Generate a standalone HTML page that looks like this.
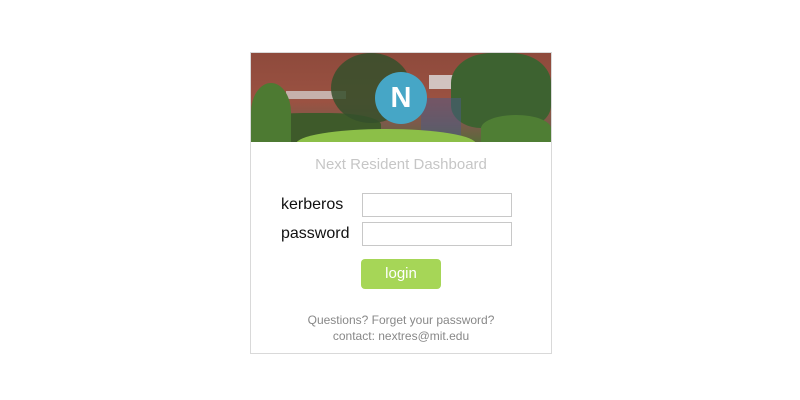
<!DOCTYPE html>
<html><head><style>
body{margin:0;width:800px;height:400px;background:#fff;font-family:"Liberation Sans",sans-serif;position:relative;overflow:hidden}
.card{position:absolute;left:250px;top:52px;width:300px;height:300px;border:1px solid #d9d9d9}
.photo{position:absolute;left:0;top:0;width:300px;height:89px;overflow:hidden;background:#9a4a3a}
.photo div{position:absolute}
.circle{position:absolute;left:124px;top:19px;width:52px;height:52px;border-radius:50%;background:#46a6c6;color:#fff;font-size:29px;font-weight:bold;text-align:center;line-height:52px}
.title{position:absolute;top:103px;width:300px;text-align:center;color:#c6c6c6;font-size:15px}
.lbl{position:absolute;left:30px;font-size:16px;color:#111}
.inp{position:absolute;left:111px;width:148px;height:22px;border:1px solid #c8c8c8;background:#fff}
.btn{position:absolute;left:110px;top:206px;width:80px;height:30px;border-radius:4px;background:#a6d657;color:#fff;font-size:15px;text-align:center;line-height:30px}
.foot{position:absolute;top:259px;width:300px;text-align:center;color:#888;font-size:12px;line-height:16px}
</style></head><body>
<div class="card">
 <div class="photo">
  <div style="left:0;top:0;width:300px;height:89px;background:linear-gradient(180deg,#8e4a3c 0%,#9b5242 55%,#7a5a4a 80%,#5a6a3a 100%)"></div>
  <div style="left:35px;top:38px;width:60px;height:8px;background:#d8d8d8;opacity:.7"></div>
  <div style="left:178px;top:22px;width:60px;height:14px;background:#e0e0e0;opacity:.8"></div>
  <div style="left:0;top:60px;width:130px;height:29px;background:#3e5a2a;border-radius:40% 40% 0 0"></div>
  <div style="left:0;top:30px;width:40px;height:59px;background:#4d7a32;border-radius:50% 50% 0 0"></div>
  <div style="left:80px;top:0;width:80px;height:70px;background:#35502c;border-radius:50%;opacity:.85"></div>
  <div style="left:200px;top:0;width:100px;height:75px;background:#3d6230;border-radius:40% 40% 30% 30%"></div>
  <div style="left:230px;top:62px;width:70px;height:27px;background:#4f7e34;border-radius:50% 50% 0 0"></div>
  <div style="left:170px;top:45px;width:40px;height:40px;background:#4a5a8a;opacity:.5"></div>
  <div style="left:45px;top:76px;width:180px;height:30px;background:#8cbf48;border-radius:50% 50% 0 0"></div>
  <div class="circle">N</div>
 </div>
 <div class="title">Next Resident Dashboard</div>
 <div class="lbl" style="top:143px">kerberos</div>
 <div class="inp" style="top:140px"></div>
 <div class="lbl" style="top:172px">password</div>
 <div class="inp" style="top:169px"></div>
 <div class="btn">login</div>
 <div class="foot">Questions? Forget your password?<br>contact: nextres@mit.edu</div>
</div>
</body></html>
